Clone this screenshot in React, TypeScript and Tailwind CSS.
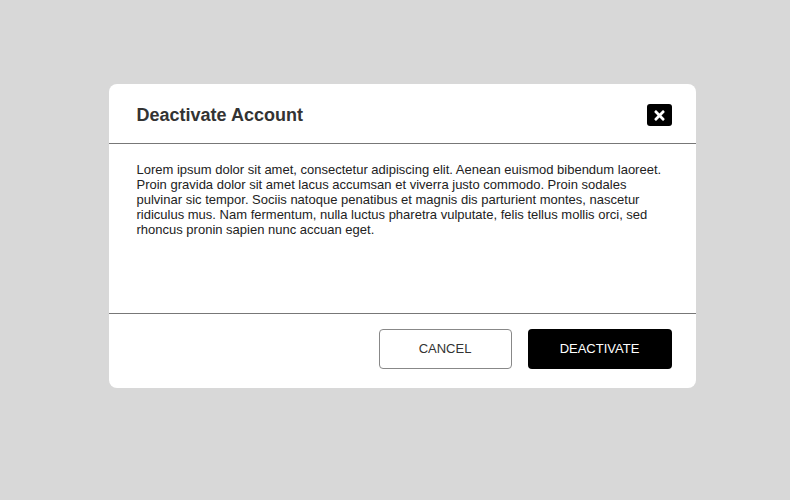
import React from 'react';
import { FaTimes } from 'react-icons/fa';

export default function App() {
  return (
    <div className="flex h-[500px] w-full items-start justify-center bg-[#d8d8d8] pl-[14px] pt-[84px] font-['Liberation_Sans',Arial,sans-serif]">
      <div className="w-[587px] overflow-hidden rounded-lg bg-white">
        <div className="flex h-[59px] items-center justify-between pl-[28px] pr-[24px] pt-[3px]">
          <h2 className="text-[18px] font-bold text-[#333]">Deactivate Account</h2>
          <button className="flex h-[22px] w-[25px] items-center justify-center rounded-[3px] bg-black text-white">
            <FaTimes className="h-[15px] w-[15px]" />
          </button>
        </div>
        <div className="h-[171px] border-y border-[#777] px-[28px] pt-[18px]">
          <p className="text-[13px] leading-[15px] text-[#222]">
            Lorem ipsum dolor sit amet, consectetur adipiscing elit. Aenean euismod bibendum laoreet. Proin gravida dolor
            sit amet lacus accumsan et viverra justo commodo. Proin sodales pulvinar sic tempor. Sociis natoque penatibus
            et magnis dis parturient montes, nascetur ridiculus mus. Nam fermentum, nulla luctus pharetra vulputate, felis
            tellus mollis orci, sed rhoncus pronin sapien nunc accuan eget.
          </p>
        </div>
        <div className="flex h-[74px] items-start justify-end gap-4 pr-[24px] pt-[15px]">
          <button className="h-[40px] w-[133px] rounded-[4px] border border-[#888] bg-white text-[13px] text-[#333]">
            CANCEL
          </button>
          <button className="h-[40px] w-[144px] rounded-[4px] bg-black text-[13px] text-white">DEACTIVATE</button>
        </div>
      </div>
    </div>
  );
}
